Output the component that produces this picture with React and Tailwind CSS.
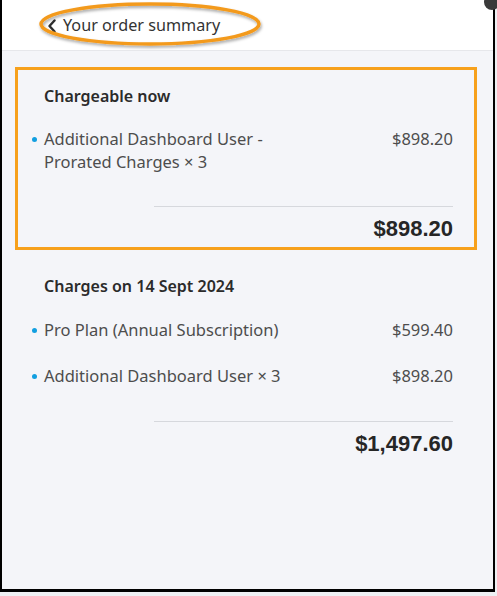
const sans = { fontFamily: '"Noto Sans", "Open Sans", sans-serif' };

function LineItem({ label, price }) {
  return (
    <div className="flex items-start justify-between gap-6">
      <div className="flex items-start">
        <span className="mt-[10px] mr-[7px] -ml-[12px] h-[5px] w-[5px] shrink-0 rounded-full bg-[#129fe0]" />
        <span className="text-[16.5px] leading-[23px] text-[#4d4d4d]">{label}</span>
      </div>
      <span className="text-[16.5px] leading-[23px] text-[#4d4d4d]">{price}</span>
    </div>
  );
}

function Total({ amount, gap }) {
  return (
    <div className={"ml-auto w-[299px] " + gap}>
      <div className="h-px bg-[#d6d8dd]" />
      <div
        className="mt-[10px] text-right text-[22px] font-bold leading-[24px] text-[#262626]"
        style={{ fontFamily: '"Liberation Sans", Arial, sans-serif' }}
      >
        {amount}
      </div>
    </div>
  );
}

export default function App() {
  return (
    <div className="relative h-[596px] w-[497px] overflow-hidden bg-[#eef0f3]" style={sans}>
      <div className="flex h-[592px] w-[495px] flex-col border-r-2 border-b-[3px] border-l-2 border-black bg-[#f4f5f9]">
        {/* header */}
        <div className="relative flex h-[51px] shrink-0 items-center border-b border-[#e6e7eb] bg-white pl-[45px]">
          <svg width="10" height="14" viewBox="0 0 10 14" className="mt-[1px]">
            <path d="M7.5 1.5 L2.5 7 L7.5 12.5" fill="none" stroke="#2d2d2d" strokeWidth="2.4" strokeLinecap="round" strokeLinejoin="round" />
          </svg>
          <span className="ml-[6px] text-[16.2px] text-[#333]">Your order summary</span>
          <svg
            className="pointer-events-none absolute top-0 left-[30px]"
            width="240"
            height="50"
            viewBox="0 0 240 50"
          >
            <defs>
              <filter id="sh" x="-10%" y="-30%" width="120%" height="160%">
                <feDropShadow dx="1" dy="2" stdDeviation="1.5" floodColor="#000" floodOpacity="0.35" />
              </filter>
            </defs>
            <ellipse cx="118" cy="24" rx="109" ry="20" fill="none" stroke="#f39a1e" strokeWidth="3.5" filter="url(#sh)" />
          </svg>
        </div>

        {/* chargeable now */}
        <div className="mt-[16px] mr-[16px] ml-[13px] border-[3px] border-[#f7a11c] pt-[16px] pr-[21px] pb-[6px] pl-[26px]">
          <div className="text-[16px] leading-[20px] font-semibold text-[#2b2b2b]">Chargeable now</div>
          <div className="mt-[21px]">
            <LineItem label={<>Additional Dashboard User -<br />Prorated Charges × 3</>} price="$898.20" />
          </div>
          <Total amount="$898.20" gap="mt-[33px]" />
        </div>

        {/* next charges */}
        <div className="pt-[26px] pr-[40px] pl-[42px]">
          <div className="text-[16px] leading-[20px] font-semibold text-[#2b2b2b]">Charges on 14 Sept 2024</div>
          <div className="mt-[22px] flex flex-col gap-[23px]">
            <LineItem label="Pro Plan (Annual Subscription)" price="$599.40" />
            <LineItem label="Additional Dashboard User × 3" price="$898.20" />
          </div>
          <Total amount="$1,497.60" gap="mt-[34px]" />
        </div>
      </div>
      <div className="absolute -top-[6px] right-[-3px] h-[16px] w-[16px] rounded-full bg-[#3a3a3a]" />
    </div>
  );
}
